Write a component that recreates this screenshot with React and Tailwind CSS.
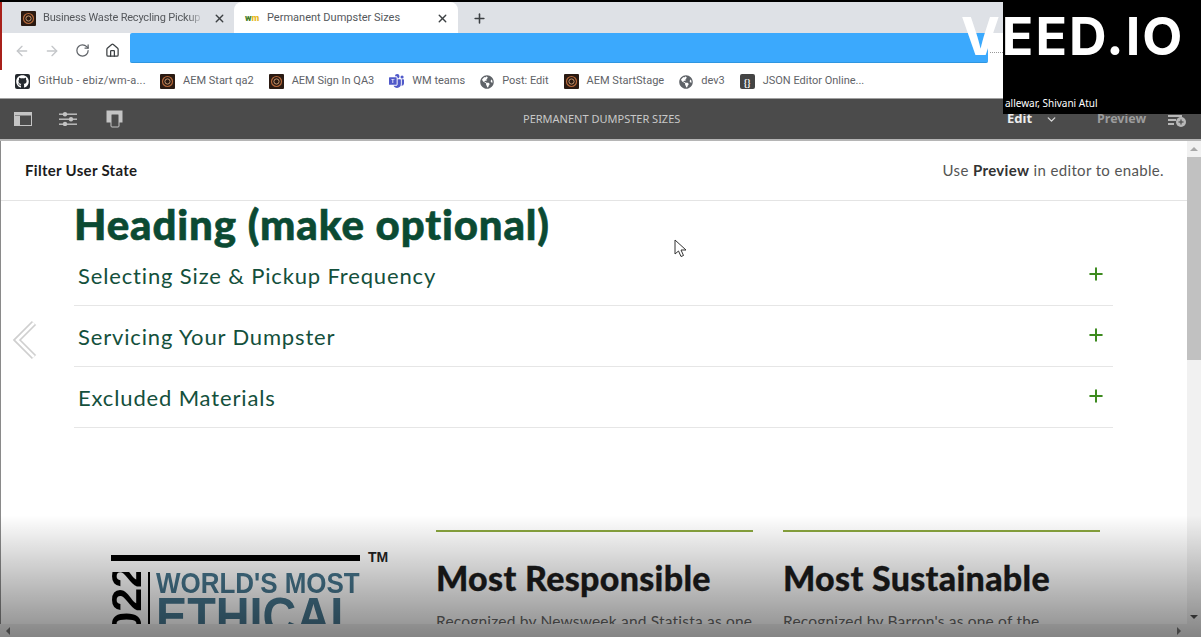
import { ArrowLeft, ArrowRight, RotateCw, Home, X, Plus, ChevronDown } from 'lucide-react';
import { FaGithub, FaGlobeAmericas } from 'react-icons/fa';
import { BsMicrosoftTeams } from 'react-icons/bs';

function AemIcon() {
  return (
    <svg width="15" height="15" viewBox="0 0 15 15" className="shrink-0">
      <rect width="15" height="15" rx="1" fill="#2a1a12" />
      <circle cx="7.5" cy="7.5" r="5" fill="none" stroke="#b5683a" strokeWidth="1.2" />
      <circle cx="7.5" cy="7.5" r="2.6" fill="none" stroke="#c9986f" strokeWidth="1" />
    </svg>
  );
}

function Bookmark({ icon, label, wide }) {
  return (
    <div className="flex items-center gap-[8px] mr-[15px]">
      {icon}
      <span className={`font-['Roboto',sans-serif] text-[11px] text-[#5f6368] whitespace-nowrap ${wide ? 'w-[107px] tracking-[0.25px]' : ''}`}>{label}</span>
    </div>
  );
}

function AccordionRow({ label }) {
  return (
    <div className="flex h-[61px] items-center justify-between border-b border-[#e6e6e6] pl-[4px] pr-[7px]">
      <span className="text-[22px] tracking-[0.85px] text-[#14503c] pt-[1px]">{label}</span>
      <Plus size={20} strokeWidth={2.4} className="text-[#3d8b1f] mb-[3px]" />
    </div>
  );
}

function AwardColumn({ title, text }) {
  return (
    <div className="w-[317px]">
      <div className="h-[2px] bg-[#8aa63f]" />
      <h2 className="mt-[26px] text-[34px] leading-[40px] font-black tracking-[0.3px] text-[#1c1c1c] whitespace-nowrap [-webkit-text-stroke:0.3px_#1c1c1c]">{title}</h2>
      <p className="mt-[11px] text-[15.5px] leading-[24px] tracking-[0.2px] text-[#666] whitespace-nowrap">{text}</p>
    </div>
  );
}

export default function App() {
  return (
    <div className="relative flex h-[637px] w-[1201px] flex-col overflow-hidden bg-white font-['Lato',sans-serif]">
      <div className="h-[2px] bg-black" />

      {/* tabs */}
      <div className="flex h-[31px] items-end bg-[#dee1e6] pl-[2px] font-['Roboto',sans-serif]">
        <div className="flex h-[31px] w-[232px] items-center pl-[19px] pt-[2px]">
          <AemIcon />
          <span className="ml-[7px] w-[161px] overflow-hidden whitespace-nowrap text-[11px] tracking-[-0.2px] text-[#55585c] [mask-image:linear-gradient(to_right,black_90%,transparent)]">Business Waste Recycling Pickup</span>
          <X size={13} strokeWidth={2.5} className="ml-[9px] text-[#3c4043]" />
        </div>
        <div className="flex h-[31px] w-[224px] items-center rounded-t-[8px] bg-white pl-[11px] pt-[2px]">
          <span className="w-[15px] text-[9px] font-black leading-none text-[#3f7d2b]">w<span className="text-[#e8b923]">m</span></span>
          <span className="ml-[7px] w-[169px] whitespace-nowrap text-[11px] text-[#55585c]">Permanent Dumpster Sizes</span>
          <X size={13} strokeWidth={2.5} className="text-[#3c4043]" />
        </div>
        <Plus size={15} strokeWidth={2.5} className="mb-[7px] ml-[14px] text-[#3c4043]" />
      </div>

      {/* toolbar */}
      <div className="flex h-[32px] items-start bg-white">
        <div className="flex h-[32px] w-[130px] items-center pl-[14px] pt-[3px]">
          <ArrowLeft size={16} className="text-[#c4c6c9]" />
          <ArrowRight size={16} className="ml-[14px] text-[#c4c6c9]" />
          <RotateCw size={15} strokeWidth={2} className="ml-[15px] text-[#5f6368]" />
          <Home size={15} strokeWidth={2} className="ml-[15px] text-[#3c4043]" />
        </div>
        <div className="h-[30px] w-[858px] rounded-[2px] border-b border-[#2f96e0] bg-[#3ba9fd]" />
      </div>

      {/* bookmarks */}
      <div className="flex h-[34px] items-center border-b border-[#a0a0a0] bg-white pl-[15px]">
        <Bookmark wide icon={<span className="flex h-[15px] w-[15px] items-center justify-center rounded-[2px] bg-[#24292e]"><FaGithub size={13} className="text-white" /></span>} label="GitHub - ebiz/wm-a..." />
        <Bookmark icon={<AemIcon />} label="AEM Start qa2" />
        <Bookmark icon={<AemIcon />} label="AEM Sign In QA3" />
        <Bookmark icon={<BsMicrosoftTeams size={15} className="text-[#5059c9]" />} label="WM teams" />
        <Bookmark icon={<FaGlobeAmericas size={14} className="text-[#5f6368]" />} label="Post: Edit" />
        <Bookmark icon={<AemIcon />} label="AEM StartStage" />
        <Bookmark icon={<FaGlobeAmericas size={14} className="text-[#5f6368]" />} label="dev3" />
        <Bookmark icon={<span className="flex h-[15px] w-[15px] items-center justify-center rounded-[2px] bg-[#444] text-[10px] font-bold leading-none text-white">{'{}'}</span>} label="JSON Editor Online..." />
      </div>

      {/* editor bar */}
      <div className="relative flex h-[42px] items-center border-b-2 border-[#b5b5b5] bg-[#4b4b4b] pl-[14px] font-['Noto_Sans',sans-serif] text-[#c9c9c9]">
        <svg width="18" height="14" viewBox="0 0 18 14" fill="none">
          <rect x="0.5" y="0.5" width="17" height="13" fill="#4b4b4b" stroke="#c4c4c4" />
          <rect x="0.5" y="0.5" width="17" height="3" fill="#c4c4c4" />
          <rect x="1" y="4" width="5" height="9" fill="#c4c4c4" />
        </svg>
        <svg width="18" height="14" viewBox="0 0 18 14" className="ml-[27px]" fill="#c4c4c4">
          <rect y="1.5" width="18" height="1.4" />
          <rect y="6.5" width="18" height="1.4" />
          <rect y="11.5" width="18" height="1.4" />
          <circle cx="6" cy="2.2" r="2.2" />
          <circle cx="12" cy="7.2" r="2.2" />
          <circle cx="6" cy="12" r="2.2" />
        </svg>
        <svg width="17" height="18" viewBox="0 0 17 18" className="ml-[29px]" fill="none">
          <rect x="0.5" y="0.5" width="16" height="12" fill="#c4c4c4" />
          <rect x="5" y="4" width="8" height="13" rx="1" fill="#4b4b4b" stroke="#c4c4c4" />
        </svg>
        <span className="ml-[400px] w-[157px] whitespace-nowrap text-[11px] text-[#c8c8c8]">PERMANENT DUMPSTER SIZES</span>
        <span className="ml-[327px] text-[13px] font-bold text-[#ececec]">Edit</span>
        <ChevronDown size={13} strokeWidth={2.5} className="ml-[13px] text-[#d8d8d8]" />
        <span className="ml-[39px] text-[12.5px] font-bold text-[#9c9c9c]">Preview</span>
        <svg width="18" height="16" viewBox="0 0 18 16" className="ml-[22px]" fill="#b8b8b8">
          <rect width="14" height="2" />
          <rect y="4" width="14" height="2" />
          <rect y="8" width="8" height="2" />
          <rect y="12" width="6" height="2" />
          <circle cx="13" cy="11" r="5" />
          <rect x="12.4" y="8.5" width="1.2" height="5" fill="#4b4b4b" />
          <rect x="10.5" y="10.4" width="5" height="1.2" fill="#4b4b4b" />
        </svg>
      </div>

      {/* page + vertical scrollbar */}
      <div className="flex min-h-0 flex-1 border-l border-[#8a8a8a]">
        <div className="min-w-0 flex-1 overflow-hidden">
          <div className="flex h-[60px] items-center justify-between border-b border-[#e4e4e4] pl-[24px] pr-[23px]">
            <span className="text-[15px] font-bold tracking-[0.3px] text-[#1c1c1c]">Filter User State</span>
            <span className="text-[15px] tracking-[0.35px] text-[#555]">Use <b className="text-[#333]">Preview</b> in editor to enable.</span>
          </div>

          <div className="ml-[73px] w-[1039px]">
            <h1 className="h-[44px] text-[42px] leading-[46px] font-black tracking-[0.85px] text-[#0b4a33] whitespace-nowrap [-webkit-text-stroke:0.6px_#0b4a33]">Heading (make optional)</h1>
            <AccordionRow label="Selecting Size & Pickup Frequency" />
            <AccordionRow label="Servicing Your Dumpster" />
            <AccordionRow label="Excluded Materials" />
          </div>

          <div className="mt-[102px] flex">
            <div className="ml-[110px] w-[325px] pt-[25px]">
              <div className="flex items-start">
                <div className="h-[6px] w-[249px] bg-black" />
                <span className="ml-[8px] -mt-[6px] font-['Liberation_Sans',sans-serif] text-[14px] font-bold leading-[16px] text-[#222]">TM</span>
              </div>
              <div className="mt-[7px] flex font-['Liberation_Sans',sans-serif] font-bold">
                <div className="h-[58px] w-[39px] overflow-hidden border-r-2 border-black">
                  <span className="-mt-[8px] block w-[31px] text-[43px] leading-[31px] text-black [writing-mode:vertical-rl] rotate-180 whitespace-nowrap">2022</span>
                </div>
                <div className="ml-[6px] w-[204px] text-[#47778f]">
                  <div className="origin-left scale-x-[0.865] text-[30px] leading-[22px] whitespace-nowrap">WORLD'S MOST</div>
                  <div className="mt-[1px] origin-left scale-x-[0.9] text-[52px] leading-[42px] whitespace-nowrap">ETHICAL</div>
                </div>
              </div>
            </div>
            <AwardColumn title="Most Responsible" text="Recognized by Newsweek and Statista as one" />
            <div className="w-[30px]" />
            <AwardColumn title="Most Sustainable" text="Recognized by Barron's as one of the" />
          </div>
        </div>

        <div className="flex w-[14px] flex-col bg-[#f1f1f1]">
          <div className="flex h-[16px] items-center justify-center">
            <div className="border-x-[4px] border-b-[4px] border-x-transparent border-b-[#a8a8a8]" />
          </div>
          <div className="h-[203px] bg-[#c1c1c1]" />
          <div className="mt-auto flex h-[14px] items-center justify-center">
            <div className="border-x-[4px] border-t-[4px] border-x-transparent border-t-[#505050]" />
          </div>
        </div>
      </div>

      {/* horizontal scrollbar */}
      <div className="flex h-[13px] items-center justify-between bg-[#f1f1f1] px-[6px]">
        <div className="border-y-[4px] border-r-[4px] border-y-transparent border-r-[#777]" />
        <div className="mr-[14px] border-y-[4px] border-l-[4px] border-y-transparent border-l-[#777]" />
      </div>

      {/* video fade at the bottom */}
      <div className="pointer-events-none absolute inset-x-0 bottom-0 h-[122px] bg-gradient-to-b from-transparent to-black/45" />

      {/* carousel arrow */}
      <svg width="26" height="40" viewBox="0 0 26 40" className="absolute left-[12px] top-[320px]" fill="none">
        <path d="M22 3 L5 20 L22 37" stroke="#cfcfcf" strokeWidth="6" />
        <path d="M22 3 L5 20 L22 37" stroke="#fff" strokeWidth="2.5" />
      </svg>

      {/* mouse cursor */}
      <svg width="14" height="19" viewBox="0 0 14 19" className="absolute left-[674px] top-[239px]">
        <path d="M1 1 L1 15 L4.5 12 L7 17.5 L9.5 16.5 L7 11 L12 11 Z" fill="#fff" stroke="#333" strokeWidth="1" />
      </svg>

      {/* red strip of the window behind */}
      <div className="absolute left-0 top-[2px] h-[68px] w-[2px] bg-[#a8201a]" />

      {/* dotted leftover beside the watermark */}
      <div className="absolute left-[990px] top-[52px] w-[13px] border-t border-dotted border-[#999]" />

      {/* watermark */}
      <div className="absolute right-0 top-[2px] flex h-[112px] w-[198px] items-end bg-black pb-[4px] pl-[2px] font-['Noto_Sans',sans-serif]">
        <span className="text-[10px] leading-[13px] text-white whitespace-nowrap">allewar, Shivani Atul</span>
      </div>
      <span className="absolute left-[961px] top-[5px] font-['Inter',sans-serif] text-[52px] leading-[64px] font-bold tracking-[2px] text-white whitespace-nowrap">VEED.IO</span>
    </div>
  );
}
